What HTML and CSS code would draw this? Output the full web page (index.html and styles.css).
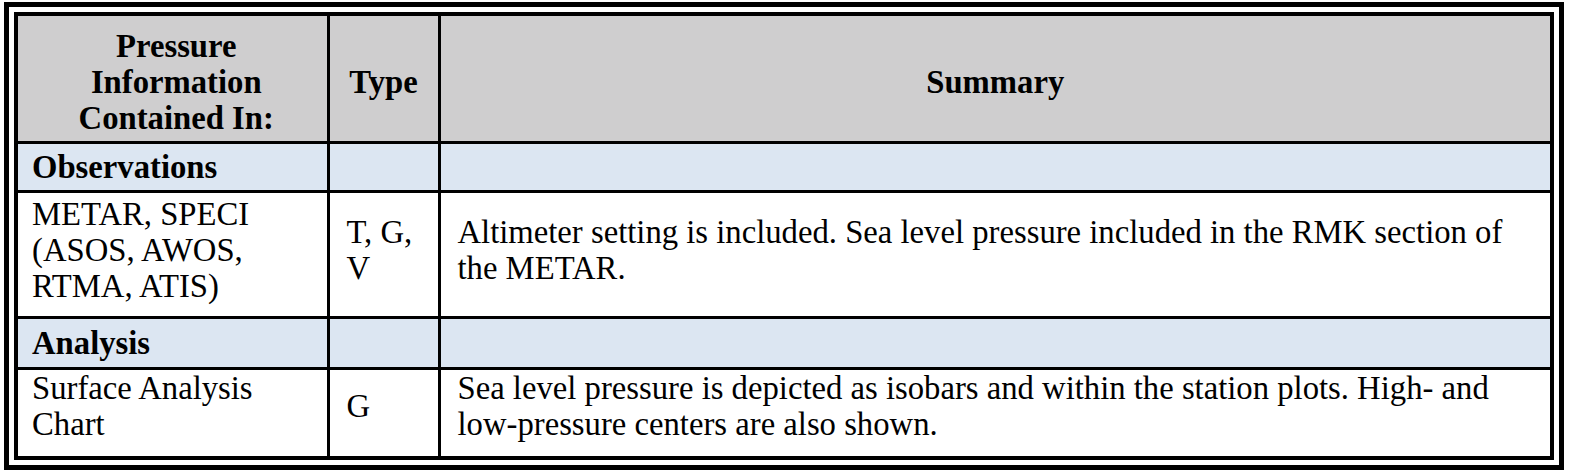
FILE: index.html
```html
<!DOCTYPE html>
<html>
<head>
<meta charset="utf-8">
<link rel="stylesheet" href="styles.css">
</head>
<body>
<div class="frame">
<div class="inner">
<table class="info">
<colgroup><col class="c1"><col class="c2"><col class="c3"></colgroup>
<tr class="head">
<th class="h1">Pressure<br>Information<br>Contained In:</th>
<th>Type</th>
<th>Summary</th>
</tr>
<tr class="section">
<td class="sec-title">Observations</td><td></td><td></td>
</tr>
<tr class="r-metar">
<td>METAR, SPECI<br>(ASOS, AWOS,<br>RTMA, ATIS)</td>
<td class="type">T, G,<br>V</td>
<td class="sum">Altimeter setting is included. Sea level pressure included in the RMK section of the METAR.</td>
</tr>
<tr class="section">
<td class="sec-title">Analysis</td><td></td><td></td>
</tr>
<tr class="r-sfc">
<td>Surface Analysis<br>Chart</td>
<td class="type">G</td>
<td class="sum">Sea level pressure is depicted as isobars and within the station plots. High- and low-pressure centers are also shown.</td>
</tr>
</table>
</div>
</div>
</body>
</html>
```
FILE: styles.css
```css
html, body { margin: 0; padding: 0; background: #fff; }
body { padding: 2px 0 0 4px; }
.frame {
  width: 1540px;
  border: 5px solid #000;
  padding: 5px;
  background: #fff;
}
.inner {
  border: 4px solid #000;
}
.info {
  width: 1532px;
  border-collapse: collapse;
  border-style: hidden;
  table-layout: fixed;
  font-family: "Liberation Serif", "Times New Roman", serif;
  font-size: 32.7px;
  line-height: 36px;
  color: #000;
}
.c1 { width: 310px; }
.c2 { width: 111px; }
.info th, .info td {
  border: 3px solid #000;
  padding: 0 14px;
  vertical-align: middle;
  text-align: left;
}
.info .type, .info .sum { padding-left: 17px; padding-right: 8px; }
.head th {
  background: #cfcecf;
  font-weight: bold;
  text-align: center;
  height: 119px;
  padding-top: 6px;
}
.head .h1 { padding-left: 18px; padding-right: 10px; }
.section td { background: #dce6f2; height: 46px; }
.section + .r-metar + .section td { height: 48px; }
.sec-title { font-weight: bold; }
.r-metar td { height: 113px; padding-bottom: 10px; }
.r-sfc td { height: 71px; padding-bottom: 14px; }
```
